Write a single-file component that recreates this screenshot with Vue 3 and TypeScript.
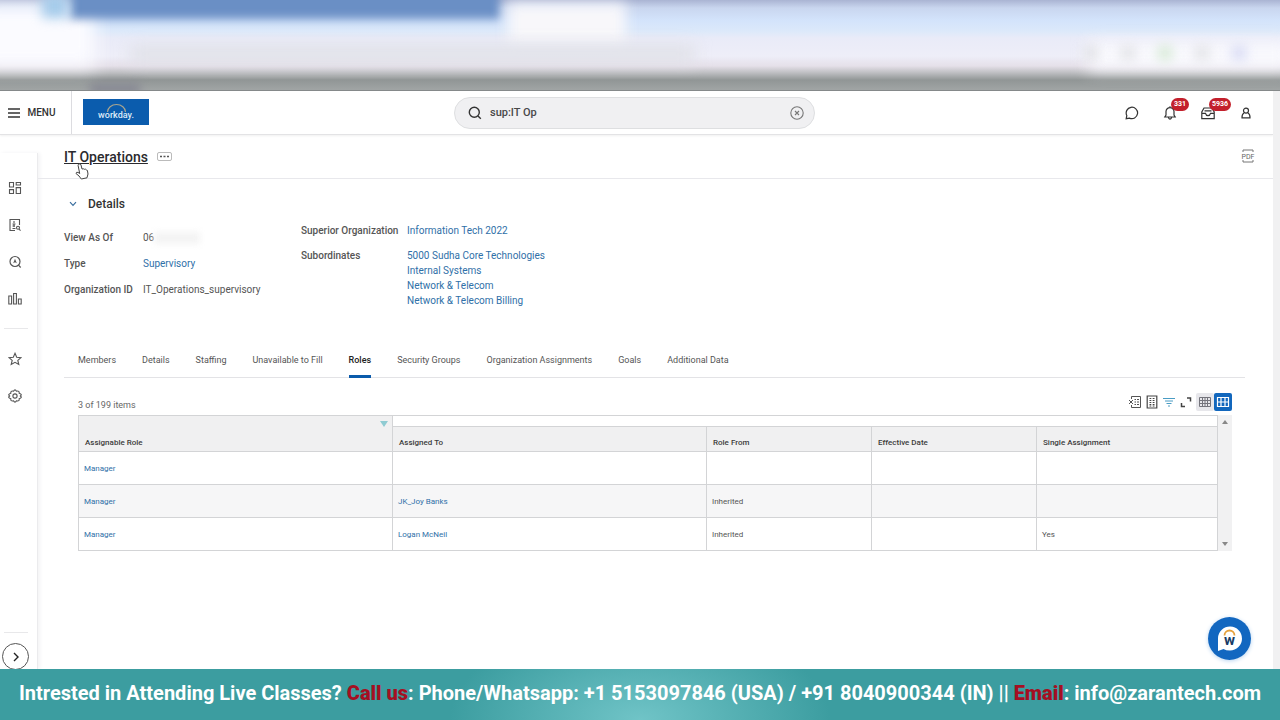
<script setup lang="ts">
import { ref } from 'vue'

interface Row { role: string; assigned: string; from: string; date: string; single: string }

const query = ref('sup:IT Op')
const activeTab = ref('Roles')
const tabs = ['Members', 'Details', 'Staffing', 'Unavailable to Fill', 'Roles', 'Security Groups', 'Organization Assignments', 'Goals', 'Additional Data']
const subordinates = ['5000 Sudha Core Technologies', 'Internal Systems', 'Network & Telecom', 'Network & Telecom Billing']
const rows: Row[] = [
  { role: 'Manager', assigned: '', from: '', date: '', single: '' },
  { role: 'Manager', assigned: 'JK_Joy Banks', from: 'Inherited', date: '', single: '' },
  { role: 'Manager', assigned: 'Logan McNeil', from: 'Inherited', date: '', single: 'Yes' },
]
</script>

<template>
  <div class="page">
    <div class="chrome" aria-hidden="true">
      <div class="glow-left"></div>
      <div class="strip"></div>
      <div class="tab-shape"></div>
      <div class="icon-shape"></div>
      <div class="address"></div>
      <div class="glow-right"></div>
      <div class="tools"><i></i><i></i><i class="green"></i><i></i><i class="violet"></i></div>
      <div class="bookmarks"></div>
    </div>

    <div class="frame">
      <div class="app">
        <header class="topbar">
          <div class="left">
            <button class="menu">
              <svg width="12" height="10" viewBox="0 0 12 10"><path d="M0 1H12M0 5H12M0 9H12" stroke="#333" stroke-width="1.3" /></svg>
              MENU
            </button>
            <a class="logo" href="#" aria-label="workday">
              <svg width="66" height="26" viewBox="0 0 66 26">
                <path d="M24.500 13A9 7.500 0 0 1 42.500 13" fill="none" stroke="#a9a58f" stroke-width="1.2" />
                <text x="33" y="19" text-anchor="middle" class="logo-text">workday.</text>
              </svg>
            </a>
          </div>
          <label class="search">
            <svg width="14" height="14" viewBox="0 0 14 14" fill="none" stroke="#333" stroke-width="1.4"><circle cx="6.3" cy="6.3" r="5" /><path d="M10 10L12.8 12.8" /></svg>
            <input v-model="query" type="text" aria-label="Search" />
            <button aria-label="Clear search" @click="query = ''">
              <svg width="14" height="14" viewBox="0 0 14 14" fill="none" stroke="#777" stroke-width="1.1"><circle cx="7" cy="7" r="6.2" /><path d="M5 5L9 9M9 5L5 9" /></svg>
            </button>
          </label>
          <nav class="actions">
            <button aria-label="Chat"><svg width="14" height="14" viewBox="0 0 14 14" fill="none" stroke="#333" stroke-width="1.2"><path d="M1.2 12.7L1.8 9.500A5.700 5.700 0 1 1 4.500 12.100Z" /></svg></button>
            <button aria-label="Notifications">
              <svg width="14" height="14" viewBox="0 0 14 14" fill="none" stroke="#333" stroke-width="1.2"><path d="M1.8 11H12.2L11 9V5.6A4 4 0 0 0 3 5.6V9ZM7 1.6V.3M5.3 11.4Q7 14.8 8.7 11.4" /></svg>
              <span class="badge">331</span>
            </button>
            <button aria-label="Inbox">
              <svg width="14" height="14" viewBox="0 0 14 14" fill="none" stroke="#333" stroke-width="1.2"><path d="M.8 12.7V6L3 2H11L13.2 6V12.7ZM.8 7.4H4.5Q5 9.6 7 9.6T9.5 7.4H13.2M3.5 4.8H10.5" /></svg>
              <span class="badge">5936</span>
            </button>
            <button aria-label="Profile"><svg width="14" height="14" viewBox="0 0 14 14" fill="none" stroke="#333" stroke-width="1.2"><circle cx="7" cy="4.6" r="2.5" /><path d="M5.2 6.7Q2.8 8 3 11.8H11Q11.2 8 8.8 6.7" /></svg></button>
          </nav>
        </header>

        <div class="body">
          <aside class="rail">
            <button aria-label="Dashboard"><svg width="14" height="14" viewBox="0 0 14 14" fill="none" stroke="#555" stroke-width="1.1"><path d="M1.5 1.5H5.5V6H1.5ZM8.2 1.5H12.5V4H8.2ZM1.5 8.6H5.5V12.5H1.5ZM8.2 6.6H12.5V12.5H8.2Z" /></svg></button>
            <button aria-label="Directory"><svg width="14" height="14" viewBox="0 0 14 14" fill="none" stroke="#555" stroke-width="1.1"><path d="M7 12.5H2V1.5H11.5V7M6 3V5M4.5 6H7.5M6 6V9M4.5 10.5H7.5M4.5 8H7" /><circle cx="10" cy="9.8" r="1.5" /><path d="M11 11L12.5 12.7" /></svg></button>
            <button aria-label="Explore"><svg width="14" height="14" viewBox="0 0 14 14" fill="none" stroke="#555" stroke-width="1.2"><circle cx="7" cy="6.5" r="5" /><path d="M10.5 10.2L12.7 12.5" /><path d="M7 3.8L8.8 8.2L7 7.2L5.2 8.2Z" fill="#555" stroke="none" /></svg></button>
            <button aria-label="Reports"><svg width="14" height="14" viewBox="0 0 14 14" fill="none" stroke="#555" stroke-width="1.1"><path d="M.8 4H3.6V12H.8ZM5.6 1.5H8.4V12H5.6ZM10.4 7H13.2V12H10.4Z" /></svg></button>
            <hr class="first" />
            <button aria-label="Favorites"><svg width="14" height="14" viewBox="0 0 14 14" fill="none" stroke="#555" stroke-width="1.1"><path d="M7 1.3L8.7 5.2L13 5.6L9.8 8.4L10.8 12.5L7 10.3L3.2 12.5L4.2 8.4L1 5.6L5.3 5.2Z" /></svg></button>
            <button aria-label="Settings"><svg width="14" height="14" viewBox="0 0 14 14" fill="none" stroke="#555" stroke-width="1.1"><circle cx="7" cy="7" r="2.1" /><path d="M5.5 2.2Q7 -.4 8.5 2.2Q11.5 1.4 11.2 4.3Q14.6 5.3 12.4 7Q14.6 8.7 11.2 9.7Q11.5 12.6 8.5 11.8Q7 14.4 5.5 11.8Q2.5 12.6 2.8 9.7Q-.6 8.7 1.6 7Q-.6 5.3 2.8 4.3Q2.5 1.4 5.5 2.2Z" /></svg></button>
            <hr class="last" />
            <button class="expand" aria-label="Expand"><svg width="8" height="12" viewBox="0 0 8 12"><path d="M2 2L6 6L2 10" fill="none" stroke="#222" stroke-width="1.4" /></svg></button>
          </aside>

          <main>
            <div class="title-row">
              <h1><a href="#">IT Operations</a></h1>
              <button class="dots" aria-label="Related actions"><svg width="15" height="9" viewBox="0 0 15 9"><rect x=".5" y=".5" width="14" height="8" rx="1.5" fill="#fff" stroke="#aaa" stroke-width=".8" /><path d="M3 4.5H5M6.5 4.5H8.5M10 4.5H12" stroke="#555" stroke-width="1.4" /></svg></button>
              <button class="pdf" aria-label="Export to PDF">
                <svg width="14" height="14" viewBox="0 0 14 14"><path d="M2 3V1H12V3M2 11V13H12V11" fill="none" stroke="#777" /><text x="7" y="10" text-anchor="middle" class="pdf-text">PDF</text></svg>
              </button>
              <svg class="cursor" width="14" height="18" viewBox="0 0 14 18"><path d="M4 1Q5.5 .2 6 2L7 6L8.4 5.8L9.5 6.3L10.6 6.2L11.5 7L12.4 7.4L13 11L12 14.8L6.3 16L4 13L1 10.5Q1 8.8 3 9.4L4.7 10.5L3.1 2.5Q3 1.4 4 1Z" fill="#fff" stroke="#444" /></svg>
            </div>

            <section class="details">
              <h2><button aria-label="Collapse details"><svg width="8" height="6" viewBox="0 0 8 6"><path d="M1 1.2L4 4.4L7 1.2" fill="none" stroke="#3b6f9f" stroke-width="1.2" /></svg></button>Details</h2>
              <div class="facts">
                <dl class="a">
                  <dt>View As Of</dt><dd>06<span class="redact"></span></dd>
                  <dt>Type</dt><dd><a href="#">Supervisory</a></dd>
                  <dt>Organization ID</dt><dd>IT_Operations_supervisory</dd>
                </dl>
                <dl class="b">
                  <dt>Superior Organization</dt><dd><a href="#">Information Tech 2022</a></dd>
                  <dt>Subordinates</dt><dd><a v-for="s in subordinates" :key="s" href="#">{{ s }}</a></dd>
                </dl>
              </div>
            </section>

            <nav class="tabs" role="tablist">
              <button v-for="t in tabs" :key="t" role="tab" :aria-selected="t === activeTab" :class="{ on: t === activeTab }" @click="activeTab = t">{{ t }}</button>
            </nav>

            <section class="grid">
              <div class="grid-bar">
                <span>3 of 199 items</span>
                <div class="tools-row">
                  <button aria-label="Export to Excel"><svg width="14" height="14" viewBox="0 0 14 14" fill="none" stroke="#555"><path d="M3.5 4V1.5H12.5V12.5H3.5V10M1 5L5 9M5 5L1 9" /><path d="M6.5 4.5H8M9 4.5H11M6.5 7H8M9 7H11M6.5 9.5H8M9 9.5H11" /></svg></button>
                  <button aria-label="Export worksheet"><svg width="14" height="14" viewBox="0 0 14 14" fill="none" stroke="#444"><path d="M2.2 1H11.8V13H2.2Z" stroke-width="1.2" /><path d="M4.5 3.5H6.3M7.7 3.5H9.5M4.5 5.5H6.3M7.7 5.5H9.5M4.5 7.5H6.3M7.7 7.5H9.5M4.5 9.5H6.3M7.7 9.5H9.5M4.5 11H6.3M7.7 11H9.5" /></svg></button>
                  <button aria-label="Filter"><svg width="14" height="14" viewBox="0 0 14 14" stroke="#4a9cc4"><path d="M1 3.5H13M3 6H11M4.5 8.5H9.5M6 11H8" /></svg></button>
                  <button aria-label="Full screen"><svg width="14" height="14" viewBox="0 0 14 14" fill="none" stroke="#444" stroke-width="1.5"><path d="M8 3H11.5V6.5M6 11.5H2.5V8" /></svg></button>
                  <button class="view" aria-label="Plain grid"><svg width="14" height="12" viewBox="0 0 14 12" fill="none" stroke="#74747c"><path d="M1.5 1.5H12.5V10.5H1.5ZM1.5 4.5H12.5M1.5 7.5H12.5M4.5 1.5V10.5M7 1.5V10.5M9.5 1.5V10.5" /></svg></button>
                  <button class="view active" aria-label="Expanded grid"><svg width="14" height="12" viewBox="0 0 14 12" fill="none" stroke="#fff" stroke-width="1.2"><path d="M1.5 1.5H12.5V10.5H1.5ZM1.5 6H12.5M5 1.5V10.5M9 1.5V10.5" /></svg></button>
                </div>
              </div>
              <div class="table-wrap">
                <table>
                  <colgroup><col class="wide" /><col class="wide" /><col class="mid" /><col class="mid" /><col /></colgroup>
                  <thead>
                    <tr class="group"><th rowspan="2" class="sorted">Assignable Role<svg class="sort" width="8" height="6" viewBox="0 0 8 6"><path d="M0 0H8L4 6Z" fill="#8fcbd2" /></svg></th><td colspan="4"></td></tr>
                    <tr class="heads"><th>Assigned To</th><th>Role From</th><th>Effective Date</th><th>Single Assignment</th></tr>
                  </thead>
                  <tbody>
                    <tr v-for="(r, i) in rows" :key="i">
                      <td><a href="#">{{ r.role }}</a></td>
                      <td><a v-if="r.assigned" href="#">{{ r.assigned }}</a></td>
                      <td>{{ r.from }}</td><td>{{ r.date }}</td><td>{{ r.single }}</td>
                    </tr>
                  </tbody>
                </table>
                <div class="scroll">
                  <svg width="6" height="4" viewBox="0 0 6 4"><path d="M0 4L3 0L6 4Z" fill="#888" /></svg>
                  <svg width="6" height="4" viewBox="0 0 6 4"><path d="M0 0L3 4L6 0Z" fill="#888" /></svg>
                </div>
              </div>
            </section>

            <button class="assistant" aria-label="Assistant">
              <svg width="43" height="43" viewBox="0 0 43 43">
                <circle cx="21.500" cy="21.500" r="21.500" fill="#1267c0" />
                <path d="M10 34V21A12 12 0 1 1 22 33.500Q18 33.500 15.500 32Z" fill="#fff" />
                <path d="M16.500 18.500A5 5 0 0 1 26.500 18.500" fill="none" stroke="#e5a13c" stroke-width="1.800" />
                <text x="21.500" y="28" text-anchor="middle" class="w">w</text>
              </svg>
            </button>
          </main>
        </div>
      </div>
      <div class="gutter"></div>
    </div>

    <footer>
      <p>Intrested in Attending Live Classes? <b>Call us</b>: Phone/Whatsapp: +1 5153097846 (USA) / +91 8040900344 (IN) || <b>Email</b>: info@zarantech.com</p>
    </footer>
  </div>
</template>

<style>
body { margin: 0; }
</style>

<style scoped>
* { box-sizing: border-box; }
.page { min-height: 100vh; display: flex; flex-direction: column; background: #fff; font-family: Roboto, "Liberation Sans", sans-serif; color: #555; font-size: 10px; }
button { border: 0; padding: 0; margin: 0; background: none; font: inherit; color: inherit; display: flex; align-items: center; justify-content: center; }
svg { display: block; }
a { color: #2f70a8; text-decoration: none; }

.chrome { position: relative; height: 91px; overflow: hidden; border-bottom: 1px solid #85898a; background: linear-gradient(#aab4d3 0, #c9d6ef 8px, #d3e3fb 20px, #dce9fa 31px, #e9ebf8 38px, #eeeef8 56px, #e5e0e9 66px, #c2c2c6 72px, #919696 80px, #a2a6a6 91px); }
.chrome div { position: absolute; }
.strip { left: 70px; top: -10px; width: 430px; height: 29px; background: #6a8fc5; filter: blur(5px); }
.tab-shape { left: 508px; top: 3px; width: 118px; height: 40px; background: #f8f7fa; filter: blur(7px); }
.icon-shape { left: 42px; top: -6px; width: 26px; height: 24px; background: #a5cbea; filter: blur(6px); }
.address { left: 130px; top: 46px; width: 565px; height: 16px; background: #dfe0e6; filter: blur(8px); }
.glow-left { left: -20px; top: 4px; width: 115px; height: 64px; background: #fbfbff; filter: blur(9px); }
.glow-right { left: 85%; right: -10px; top: 42px; height: 28px; background: #f9f9fd; filter: blur(8px); }
.tools { right: 34px; top: 46px; display: flex; gap: 23px; filter: blur(6px); opacity: 0.7; }
.tools i { width: 14px; height: 14px; background: #d9dadd; }
.tools .green { background: #c8e4c4; }
.tools .violet { background: #c9cdf0; }
.bookmarks { left: 90px; top: 84px; width: 50px; height: 10px; background: #858692; filter: blur(5px); }

.frame { flex: 1; display: flex; }
.app { flex: 1; min-width: 0; display: flex; flex-direction: column; }
.gutter { width: 7px; background: #f1f1f2; }

.topbar { height: 44px; display: grid; grid-template-columns: 1fr 361px 1fr; align-items: center; padding-right: 4px; border-bottom: 1px solid #e3e3e5; box-shadow: 0 1px 2px #f0f0f0; }
.left { display: flex; align-items: center; height: 43px; gap: 11px; }
.menu { width: 72px; height: 43px; gap: 7px; padding-right: 9px; border-right: 1px solid #dcdce0; color: #333; font-weight: 500; padding-left: 2px; }
.logo { background: #0b5cad; margin-bottom: 1px; }
.logo-text { font: 500 9px Roboto, sans-serif; fill: #dcebf8; }
.search { height: 32px; display: flex; align-items: center; gap: 8px; padding: 0 10px 0 13px; border: 1px solid #dedfe1; border-radius: 16px; background: #f0f0f2; }
.search input { flex: 1; min-width: 0; border: 0; padding: 0; outline: 0; background: none; font: 500 11px Roboto, sans-serif; color: #484848; }
.actions { display: flex; justify-content: flex-end; gap: 24px; padding-right: 16px; }
.actions button { position: relative; }
.badge { position: absolute; left: 8px; top: -8px; min-width: 17px; height: 13px; padding: 0 3px; border-radius: 7px; background: #c3202c; color: #fff; font-size: 7px; line-height: 13px; font-weight: 700; }

.body { flex: 1; display: flex; }
.rail { width: 38px; margin-top: 18px; padding-top: 16px; display: flex; flex-direction: column; border-right: 1px solid #ebebed; box-shadow: 2px 0 4px #f3f3f5; }
.rail button { width: 30px; height: 37px; }
.rail hr { width: 24px; margin: 0 0 0 4px; border: 0; border-top: 1px solid #e8e8ea; }
.rail .first { margin-top: 11px; margin-bottom: 11px; }
.rail .last { margin-top: auto; margin-bottom: 10px; }
.rail .expand { width: 27px; height: 27px; margin: 0 0 -1px 2px; border: 1px solid #555; border-radius: 50%; }

main { flex: 1; min-width: 0; position: relative; }
.title-row { position: relative; height: 44px; display: flex; align-items: center; padding: 0 18px 0 26px; border-bottom: 1px solid #e8e8ec; }
h1 { margin: 0 9px 0 0; font-size: 14px; line-height: 18px; font-weight: 500; }
h1 a { color: #2a2a2e; text-decoration: underline; }
.pdf { margin-left: auto; padding-bottom: 2px; }
.pdf-text { font: 7px Roboto, sans-serif; fill: #666; }
.cursor { position: absolute; left: 37px; top: 28px; }

.details { padding: 16px 26px 0; }
h2 { margin: 0; display: flex; align-items: center; gap: 11px; padding-left: 5px; font-size: 12px; line-height: 18px; font-weight: 500; color: #333; }
.facts { display: flex; align-items: flex-start; gap: 45px; height: 129px; padding-top: 10px; line-height: 15px; }
dl { margin: 0; display: grid; }
dt { font-weight: 500; }
dd { margin: 0; }
.a { grid-template-columns: 79px 113px; row-gap: 11px; padding-top: 7px; }
.b { grid-template-columns: 106px auto; row-gap: 10px; }
.b a { display: block; }
.redact { display: inline-block; width: 46px; height: 12px; vertical-align: middle; background: #f4f4f4; filter: blur(3px); }

.tabs { display: flex; gap: 26px; height: 36px; margin: 0 28px 0 26px; padding-left: 14px; border-bottom: 1px solid #e3e3e6; font-size: 9px; }
.tabs button { white-space: nowrap; border-bottom: 3px solid transparent; border-top: 3px solid transparent; margin-bottom: -1px; }
.tabs .on { border-bottom-color: #0b5bab; color: #222; font-weight: 500; }

.grid { padding: 14px 41px 0 40px; font-size: 8px; }
.grid-bar { height: 23px; display: flex; justify-content: space-between; align-items: center; font-size: 9px; color: #666; }
.grid-bar > span { padding-top: 3px; }
.tools-row { display: flex; align-items: center; gap: 3px; padding-bottom: 3px; }
.view { width: 18px; height: 18px; background: #e7e7eb; border-radius: 2px; }
.view.active { background: #1267bd; margin-left: -3px; }
.table-wrap { display: flex; }
table { flex: 1; table-layout: fixed; border-collapse: collapse; }
.wide { width: 314px; }
.mid { width: 165px; }
th, td { border: 1px solid #d3d4d6; padding: 0 6px; text-align: left; }
td { padding: 0 5px; }
th { position: relative; background: #f0f0f1; font-weight: 500; vertical-align: bottom; padding-bottom: 4px; color: #3c3c3c; }
.sort { position: absolute; right: 4px; top: 5px; }
.group td { height: 11px; }
.heads th { height: 25px; }
tbody td { height: 33px; }
tbody tr:nth-child(2) { background: #f6f6f7; }
.scroll { width: 14px; display: flex; flex-direction: column; align-items: center; justify-content: space-between; padding: 5px 0; background: #f1f1f2; }

.assistant { position: absolute; right: 22px; bottom: 9px; border-radius: 50%; box-shadow: 0 1px 4px #b8d4f0; }
.w { font: 700 15px Roboto, sans-serif; fill: #173b66; }

footer { min-height: 51px; display: flex; align-items: center; justify-content: center; color: #fff; background: radial-gradient(ellipse 190px 100px at 50% 100%, #70c4c7, #3c9da0); padding-bottom: 3px; }
footer p { margin: 0; white-space: nowrap; font: 700 20px/28px Roboto, sans-serif; }
footer b { color: #a50f22; }
</style>
